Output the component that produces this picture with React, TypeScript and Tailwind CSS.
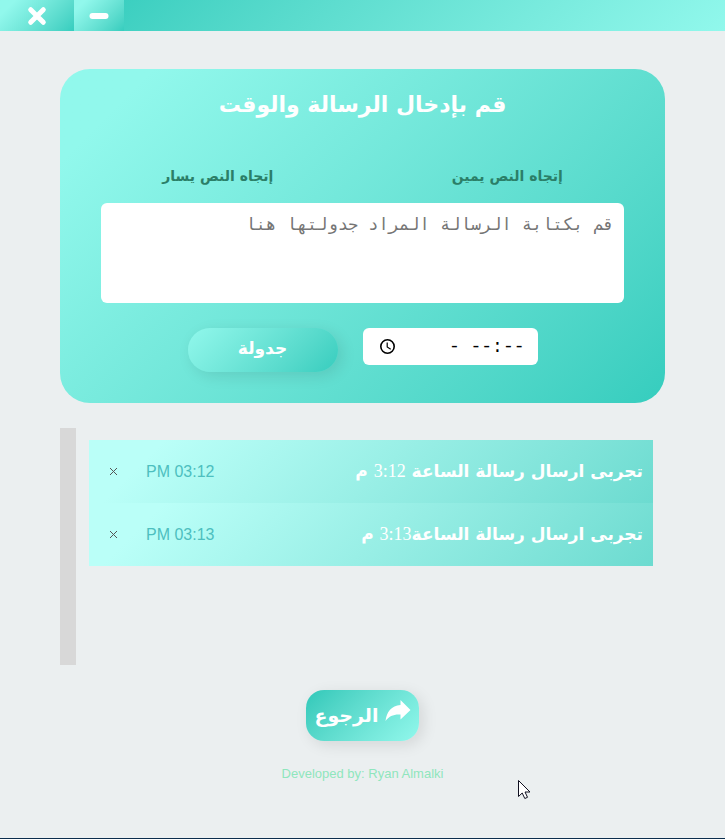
import React from "react";

const ARABIC = "font-['DejaVu_Sans','Noto_Sans',sans-serif]";
const LATIN = "font-['Liberation_Sans',Arial,sans-serif]";

type Scheduled = { id: number; before: string; clock: string; time: string };

const scheduled: Scheduled[] = [
  { id: 1, before: "تجربى ارسال رسالة الساعة ", clock: "3:12", time: "PM 03:12" },
  { id: 2, before: "تجربى ارسال رسالة الساعة", clock: "3:13", time: "PM 03:13" },
];

function TitleBar() {
  return (
    <header dir="ltr" className="flex h-[31px] bg-linear-135 from-[#35cdbe] from-12% to-[#91f8ec]">
      <button
        type="button"
        aria-label="إغلاق"
        className="flex w-[74px] items-center justify-center bg-linear-135 from-[#91f8ec] from-15% to-[#35cdbe]"
      >
        <svg width="20" height="20" viewBox="0 0 20 20" stroke="white" strokeWidth="5" strokeLinecap="round">
          <path d="M3.7 3.7 16.3 16.3M16.3 3.7 3.7 16.3" />
        </svg>
      </button>
      <button
        type="button"
        aria-label="تصغير"
        className="flex w-[50px] items-center justify-center bg-linear-135 from-[#91f8ec] from-15% to-[#35cdbe]"
      >
        <svg width="20" height="20" viewBox="0 0 20 20" stroke="white" strokeWidth="6" strokeLinecap="round">
          <path d="M3.5 10h13" />
        </svg>
      </button>
    </header>
  );
}

function ScheduleForm() {
  return (
    <form
      onSubmit={(e) => e.preventDefault()}
      className="rounded-[30px] bg-linear-135 from-[#91f8ec] from-10% to-[#35cdbe] px-[41px] pt-4 pb-[31px]"
    >
      <h1 className="text-center text-[22px] leading-[40px] font-bold text-white">قم بإدخال الرسالة والوقت</h1>
      <div className="-mx-7 mt-8 flex h-[38px] items-center text-[14px] font-bold text-[#2b7f68]">
        <button type="button" className="w-1/2">إتجاه النص يمين</button>
        <button type="button" className="w-1/2">إتجاه النص يسار</button>
      </div>
      <textarea
        aria-label="الرسالة"
        placeholder="قم بكتابة الرسالة المراد جدولتها هنا"
        className="mt-2 block h-[100px] w-full resize-none rounded-md bg-white p-[10px] font-['DejaVu_Sans_Mono','Liberation_Mono',monospace] text-[17px] leading-[22px] outline-none placeholder:text-[#757575]"
      />
      <div className="mt-[25px] flex items-start justify-center gap-[25px]">
        <div dir="ltr" className="flex h-[37px] w-[175px] items-center rounded-md bg-white pr-[13px] pl-4">
          <svg width="17" height="17" viewBox="0 0 17 17" fill="none" stroke="black" className="shrink-0">
            <circle cx="8.500" cy="8.500" r="6.700" strokeWidth="1.600" />
            <path d="M8.200 4.500v4.500l3.500 2.200" strokeWidth="1.200" />
          </svg>
          <input
            type="text"
            aria-label="الوقت"
            defaultValue="- --:--"
            className="w-full min-w-0 bg-transparent text-right font-['Liberation_Mono',monospace] text-[18px] leading-6 text-black outline-none"
          />
        </div>
        <button
          type="submit"
          className="h-11 w-[150px] rounded-full bg-linear-135 from-[#91f8ec] to-[#35cdbe] pb-[2px] text-[17px] font-bold text-white shadow-[4px_4px_15px_rgba(0,0,0,0.1)]"
        >
          جدولة
        </button>
      </div>
    </form>
  );
}

function ScheduledRow({ item }: { item: Scheduled }) {
  return (
    <li className="flex h-[63px] items-center bg-linear-135 from-[#bafff8] from-12% to-[#6cdbd0] pr-[10px] pl-5">
      <p className="flex-1 text-[17px] font-bold whitespace-pre text-white">
        {item.before}
        <span className="font-['Liberation_Serif',serif] text-[18px] font-normal">{item.clock}</span> م
      </p>
      <time dir="ltr" className={`${LATIN} mx-7 text-[16px] text-[#4dbfbf]`}>{item.time}</time>
      <button type="button" aria-label="حذف" className="flex w-[9px] justify-center text-[#555]">
        <svg width="9" height="9" viewBox="0 0 9 9" stroke="currentColor">
          <path d="m1 1 7 7M8 1 1 8" />
        </svg>
      </button>
    </li>
  );
}

export default function App() {
  return (
    <div dir="rtl" className={`${ARABIC} flex min-h-screen flex-col border-b border-[#0b2d4d] bg-[#ebeff0]`}>
      <TitleBar />
      <main className="flex flex-1 flex-col px-[60px] pt-[38px]">
        <ScheduleForm />
        <section className="mt-[25px] flex h-[237px]">
          <ul className="flex-1 overflow-hidden py-3 pr-3 pl-[13px]">
            {scheduled.map((item) => (
              <ScheduledRow key={item.id} item={item} />
            ))}
          </ul>
          <div className="w-4 bg-[#d8d8d8]" />
        </section>
        <button
          type="button"
          className="mt-[25px] flex h-[51px] w-[113px] items-center justify-center gap-[6px] self-center rounded-[18px] bg-linear-135 from-[#2fc8b9] to-[#91f8ec] text-[19px] font-bold text-white shadow-[4px_4px_15px_rgba(0,0,0,0.1)]"
        >
          <svg width="26" height="22" viewBox="0 0 26 22" fill="white" className="mb-[10px] shrink-0">
            <path d="M15.500 0 25.500 10 15.500 19.500V14.500C9 14 4 16 .5 21 1.500 12 6.500 5.500 15.500 5Z" />
          </svg>
          الرجوع
        </button>
        <p dir="ltr" className={`${LATIN} mt-[23px] text-center text-[13px] leading-5 text-[#8fe6bd]`}>
          Developed by: Ryan Almalki
        </p>
      </main>
      <svg width="13" height="20" viewBox="0 0 13 20" className="absolute top-[780px] left-[518px]">
        <path d="M.5.5v16l3.700-3.500 2.600 5.500 2.700-1.200L7 12h5Z" fill="white" stroke="#101020" />
      </svg>
    </div>
  );
}
